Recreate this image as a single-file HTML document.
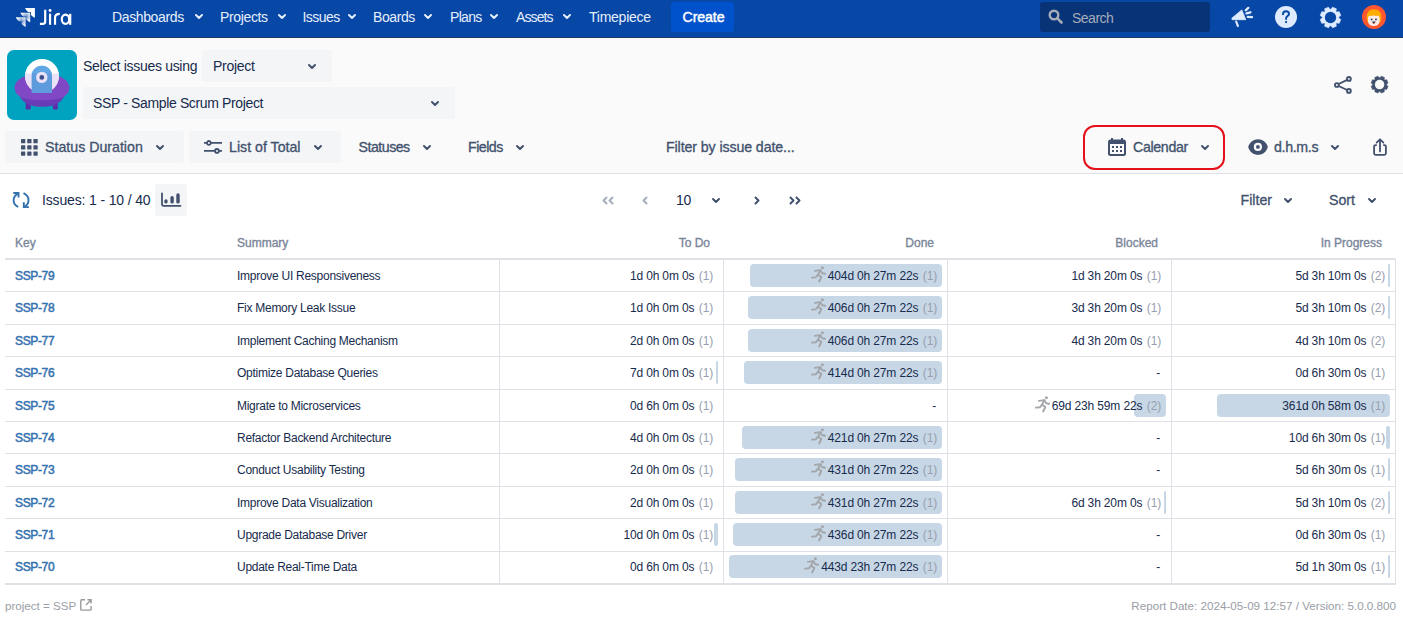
<!DOCTYPE html>
<html><head><meta charset="utf-8"><style>
*{box-sizing:border-box;margin:0;padding:0}
html,body{width:1403px;height:620px;overflow:hidden;background:#fff;font-family:"Liberation Sans",sans-serif;color:#172B4D}
.a{position:absolute;white-space:nowrap}
svg{position:absolute;overflow:visible}
.nav{position:absolute;white-space:nowrap;font-size:14px;color:#E6EFFC;line-height:16px;top:9px}
.btn{position:absolute;background:#F4F5F7;border-radius:3px}
.tb{position:absolute;white-space:nowrap;font-size:14.2px;font-weight:400;color:#42526E;line-height:16px;-webkit-text-stroke:0.32px #42526E}
.cell{position:absolute;white-space:nowrap;font-size:12px;line-height:14px;color:#172B4D;letter-spacing:-0.15px}
.sum{letter-spacing:-0.27px}
.cnt{color:#97A0AF;margin-left:1.3px}
.hd{position:absolute;white-space:nowrap;font-size:12px;font-weight:400;color:#7A869A;line-height:14px;-webkit-text-stroke:0.35px #7A869A}
.key{position:absolute;white-space:nowrap;font-size:12px;font-weight:400;color:#3572B0;line-height:14px;-webkit-text-stroke:0.5px #3572B0;letter-spacing:-0.35px}
.bar{position:absolute;background:#C7D7E6;border-radius:4px}
.hl{position:absolute;background:#DFE1E6}
</style></head><body>
<div class="a" style="left:0;top:0;width:1403px;height:37px;background:#0747A6"></div>
<div class="a" style="left:0;top:37px;width:1403px;height:1px;background:#1d3a6b"></div>
<svg style="left:0;top:0" width="80" height="37" viewBox="0 0 80 37">
<defs><radialGradient id="lg1" cx="26.1" cy="16.599999999999998" r="5.5" gradientUnits="userSpaceOnUse"><stop offset="0" stop-color="#fff" stop-opacity="0.4"/><stop offset="1" stop-color="#fff"/></radialGradient>
<radialGradient id="lg2" cx="21.6" cy="21.2" r="5.5" gradientUnits="userSpaceOnUse"><stop offset="0" stop-color="#fff" stop-opacity="0.4"/><stop offset="1" stop-color="#fff"/></radialGradient></defs>
<path d="M25.00 8.1 L34.9 8.1 L34.9 17.70 C33.40 17.10 31.90 16.10 31.00 14.90 L31.00 12.00 L28.10 12.00 C26.90 11.10 25.70 9.60 25.00 8.1 Z" fill="#fff"/>
<path d="M20.30 12.7 L30.2 12.7 L30.2 22.30 C28.70 21.70 27.20 20.70 26.30 19.50 L26.30 16.60 L23.40 16.60 C22.20 15.70 21.00 14.20 20.30 12.7 Z" fill="url(#lg1)"/>
<path d="M15.70 17.3 L25.6 17.3 L25.6 26.90 C24.10 26.30 22.60 25.30 21.70 24.10 L21.70 21.20 L18.80 21.20 C17.60 20.30 16.40 18.80 15.70 17.3 Z" fill="url(#lg2)"/>
<g fill="none" stroke="#fff" stroke-width="2.2">
<path d="M45.2 9.7 V21.5 Q45.2 23.8 42.8 23.8 H39.9"/>
<path d="M50.06 13.6 V24.8"/>
<path d="M55.03 24.8 V17.8 C55.03 15.2 57 13.9 59.8 13.9"/>
<ellipse cx="65.5" cy="19.2" rx="3.7" ry="4.6"/>
<path d="M70.2 13.8 V24.8"/>
</g><circle cx="50.06" cy="10.5" r="1.45" fill="#fff"/>
</svg>
<div class="nav" style="left:112px;letter-spacing:-0.37px">Dashboards</div>
<svg style="left:194.5px;top:14px" width="8" height="5" viewBox="0 0 8 5"><path d="M1 1 L4.0 4 L7 1" fill="none" stroke="#E6EFFC" stroke-width="2" stroke-linecap="round" stroke-linejoin="round"/></svg>
<div class="nav" style="left:220px;letter-spacing:-0.36px">Projects</div>
<svg style="left:277.5px;top:14px" width="8" height="5" viewBox="0 0 8 5"><path d="M1 1 L4.0 4 L7 1" fill="none" stroke="#E6EFFC" stroke-width="2" stroke-linecap="round" stroke-linejoin="round"/></svg>
<div class="nav" style="left:302.5px;letter-spacing:-0.54px">Issues</div>
<svg style="left:347.5px;top:14px" width="8" height="5" viewBox="0 0 8 5"><path d="M1 1 L4.0 4 L7 1" fill="none" stroke="#E6EFFC" stroke-width="2" stroke-linecap="round" stroke-linejoin="round"/></svg>
<div class="nav" style="left:373px;letter-spacing:-0.4px">Boards</div>
<svg style="left:424px;top:14px" width="8" height="5" viewBox="0 0 8 5"><path d="M1 1 L4.0 4 L7 1" fill="none" stroke="#E6EFFC" stroke-width="2" stroke-linecap="round" stroke-linejoin="round"/></svg>
<div class="nav" style="left:450px;letter-spacing:-0.7px">Plans</div>
<svg style="left:490px;top:14px" width="8" height="5" viewBox="0 0 8 5"><path d="M1 1 L4.0 4 L7 1" fill="none" stroke="#E6EFFC" stroke-width="2" stroke-linecap="round" stroke-linejoin="round"/></svg>
<div class="nav" style="left:516px;letter-spacing:-0.88px">Assets</div>
<svg style="left:563px;top:14px" width="8" height="5" viewBox="0 0 8 5"><path d="M1 1 L4.0 4 L7 1" fill="none" stroke="#E6EFFC" stroke-width="2" stroke-linecap="round" stroke-linejoin="round"/></svg>
<div class="nav" style="left:589px;letter-spacing:-0.25px">Timepiece</div>
<div class="a" style="left:671px;top:2px;width:63px;height:30px;background:#0052CC;border-radius:3px"></div>
<div class="a" style="left:682.5px;top:9px;font-size:14.2px;color:#fff;line-height:16px;-webkit-text-stroke:0.45px #fff;letter-spacing:-0.1px">Create</div>
<div class="a" style="left:1040px;top:2px;width:170px;height:30px;background:#083376;border-radius:3px"></div>
<svg style="left:1048px;top:9px" width="15" height="15" viewBox="0 0 15 15"><circle cx="6" cy="6" r="4.3" fill="none" stroke="#A5ADBA" stroke-width="2.4"/><path d="M9.2 9.2 L13.5 13.5" stroke="#A5ADBA" stroke-width="2.6" stroke-linecap="round"/></svg>
<div class="a" style="left:1072px;top:10px;font-size:14px;color:#A5ADBA;line-height:16px;letter-spacing:-0.5px">Search</div>
<svg style="left:1231px;top:7px" width="22" height="20" viewBox="0 0 22 20">
<path d="M0.8 11.2 L10.8 2.9 L14.8 12.7 L1.2 12.7 Z" fill="#DEEBFF" stroke="#DEEBFF" stroke-width="0.8" stroke-linejoin="round"/>
<path d="M5.2 14.6 L6.9 19" stroke="#DEEBFF" stroke-width="2.1" stroke-linecap="round"/>
<path d="M14.7 3.3 L17.3 0.9 M15.5 6.4 L19.4 5.3 M16.8 9.8 L21 10.2" stroke="#DEEBFF" stroke-width="2.3" stroke-linecap="round"/>
</svg>
<svg style="left:1275px;top:6px" width="22" height="22" viewBox="0 0 22 22"><circle cx="11" cy="11" r="11" fill="#DEEBFF"/>
<path d="M8 8.3 C8 6.3 9.4 5.3 11 5.3 C12.7 5.3 14 6.4 14 8 C14 9.8 11.6 10.2 11.1 12 V13" fill="none" stroke="#0747A6" stroke-width="1.9" stroke-linecap="round"/><circle cx="11.1" cy="16.1" r="1.15" fill="#0747A6"/></svg>
<svg style="left:1319.5px;top:6.5px" width="21" height="21" viewBox="0 0 21 21"><path d="M18.67 11.01 L20.81 12.51 L19.21 16.37 L16.64 15.92 L15.92 16.64 L16.37 19.21 L12.51 20.81 L11.01 18.67 L9.99 18.67 L8.49 20.81 L4.63 19.21 L5.08 16.64 L4.36 15.92 L1.79 16.37 L0.19 12.51 L2.33 11.01 L2.33 9.99 L0.19 8.49 L1.79 4.63 L4.36 5.08 L5.08 4.36 L4.63 1.79 L8.49 0.19 L9.99 2.33 L11.01 2.33 L12.51 0.19 L16.37 1.79 L15.92 4.36 L16.64 5.08 L19.21 4.63 L20.81 8.49 L18.67 9.99Z" fill="#DEEBFF" stroke="#DEEBFF" stroke-width="0.6" stroke-linejoin="round"/><circle cx="10.5" cy="10.5" r="5.67" fill="#0747A6"/></svg>
<svg style="left:1362px;top:5px" width="24" height="24" viewBox="0 0 24 24"><circle cx="12" cy="12" r="12" fill="#FF5630"/>
<path d="M4.6 13 C4.2 7.5 7.5 4.3 12 4.3 C16.5 4.3 19.8 7.5 19.4 13 C19.3 15.5 18.6 17.2 17.6 17.8 L6.4 17.8 C5.4 17.2 4.7 15.5 4.6 13Z" fill="#FFAB00"/>
<path d="M6.1 12.5 C6.5 10.8 8 10.6 9.5 10.9 C10.5 11.1 11.3 10.6 11.8 10 C12.3 10.6 13.1 11.1 14.1 10.9 C15.6 10.6 17.1 10.8 17.5 12.5 L17.6 16.5 C17.2 19.5 15 21 11.8 21 C8.6 21 6.4 19.5 6 16.5 Z" fill="#FFEBE6"/>
<circle cx="9.6" cy="14.4" r="0.95" fill="#253858"/><circle cx="14" cy="14.4" r="0.95" fill="#253858"/>
<path d="M9.7 16.6 Q11.8 20 13.9 16.6 Z" fill="#253858"/><path d="M10.6 18.3 Q11.8 19.5 13 18.3 Q11.8 17.7 10.6 18.3Z" fill="#DE350B"/></svg>
<div class="a" style="left:0;top:38px;width:1403px;height:135px;background:#FAFAFA"></div>
<div class="a" style="left:0;top:173px;width:1403px;height:1px;background:#DFE1E6"></div>
<svg style="left:7px;top:50px" width="70" height="70" viewBox="0 0 70 70">
<rect width="70" height="70" rx="7" fill="#00A3BF"/>
<rect x="18.7" y="48" width="5" height="11.5" rx="1" fill="#5B2FA8"/><rect x="45.8" y="48" width="5" height="11.5" rx="1" fill="#5B2FA8"/>
<ellipse cx="35" cy="37.8" rx="27.5" ry="15" fill="#8048C4"/>
<path d="M12.5 46.5 C19 51.5 51 51.5 57.5 46.5 C53 54 45 56.8 35 56.8 C25 56.8 17 54 12.5 46.5Z" fill="#6A3BB7"/>
<circle cx="35" cy="26" r="17" fill="#fff"/>
<path d="M18.3 22.5 C24 25.5 46 25.5 51.7 22.5 C52 23.6 52 25 52 26 C52 35.4 44.4 43 35 43 C25.6 43 18 35.4 18 26 C18 25 18 23.6 18.3 22.5Z" fill="#E9E1F6"/>
<path d="M24.6 43 V26 C24.6 20.3 29.2 15.8 34.8 15.8 C40.4 15.8 45 20.3 45 26 V43 Z" fill="#5E9BDD"/>
<path d="M24.6 22.5 V26 C24.6 20.3 29.2 15.8 34.8 15.8 C40.4 15.8 45 20.3 45 26 V22.5 C40 24.6 30 24.6 24.6 22.5Z" fill="#62A8E6" opacity="0.9"/>
<circle cx="34.8" cy="27.4" r="5.7" fill="#E9E1F6"/><circle cx="34.8" cy="27.4" r="2.4" fill="#3D4E8A"/>
</svg>
<div class="a" style="left:83px;top:58px;font-size:14px;line-height:16px;color:#172B4D;letter-spacing:-0.3px">Select issues using</div>
<div class="btn" style="left:202px;top:50px;width:130px;height:32px"></div>
<div class="a" style="left:213px;top:58px;font-size:14px;line-height:16px;color:#172B4D;letter-spacing:-0.29px">Project</div>
<svg style="left:308px;top:63.5px" width="8" height="5" viewBox="0 0 8 5"><path d="M1 1 L4.0 4 L7 1" fill="none" stroke="#42526E" stroke-width="2" stroke-linecap="round" stroke-linejoin="round"/></svg>
<div class="btn" style="left:83px;top:87px;width:372px;height:32px"></div>
<div class="a" style="left:93px;top:95px;font-size:14px;line-height:16px;color:#172B4D;letter-spacing:-0.36px">SSP - Sample Scrum Project</div>
<svg style="left:431px;top:100.5px" width="8" height="5" viewBox="0 0 8 5"><path d="M1 1 L4.0 4 L7 1" fill="none" stroke="#42526E" stroke-width="2" stroke-linecap="round" stroke-linejoin="round"/></svg>
<svg style="left:1330px;top:72px" width="28" height="26" viewBox="0 0 28 26"><g fill="none" stroke="#42526E" stroke-width="1.9"><circle cx="18.9" cy="6.9" r="1.9"/><circle cx="6.9" cy="13" r="1.9"/><circle cx="18.9" cy="18.9" r="1.9"/><path d="M8.6 12 L17.2 7.8 M8.6 14 L17.2 18"/></g></svg>
<svg style="left:1371px;top:76px" width="17.2" height="17.2" viewBox="0 0 17.2 17.2"><path d="M15.47 9.03 L17.04 10.25 L15.73 13.40 L13.76 13.15 L13.15 13.76 L13.40 15.73 L10.25 17.04 L9.03 15.47 L8.17 15.47 L6.95 17.04 L3.80 15.73 L4.05 13.76 L3.44 13.15 L1.47 13.40 L0.16 10.25 L1.73 9.03 L1.73 8.17 L0.16 6.95 L1.47 3.80 L3.44 4.05 L4.05 3.44 L3.80 1.47 L6.95 0.16 L8.17 1.73 L9.03 1.73 L10.25 0.16 L13.40 1.47 L13.15 3.44 L13.76 4.05 L15.73 3.80 L17.04 6.95 L15.47 8.17Z" fill="#42526E" stroke="#42526E" stroke-width="0.6" stroke-linejoin="round"/><circle cx="8.6" cy="8.6" r="4.73" fill="#FAFAFA"/></svg>
<div class="btn" style="left:5px;top:131px;width:179px;height:32px"></div>
<svg style="left:20.5px;top:139px" width="17" height="17" viewBox="0 0 17 17" fill="#42526E">
<rect x="0" y="0" width="4.3" height="4.3" rx="0.6"/><rect x="6.2" y="0" width="4.3" height="4.3" rx="0.6"/><rect x="12.4" y="0" width="4.3" height="4.3" rx="0.6"/>
<rect x="0" y="6.2" width="4.3" height="4.3" rx="0.6"/><rect x="6.2" y="6.2" width="4.3" height="4.3" rx="0.6"/><rect x="12.4" y="6.2" width="4.3" height="4.3" rx="0.6"/>
<rect x="0" y="12.4" width="4.3" height="4.3" rx="0.6"/><rect x="6.2" y="12.4" width="4.3" height="4.3" rx="0.6"/><rect x="12.4" y="12.4" width="4.3" height="4.3" rx="0.6"/></svg>
<div class="tb" style="left:45px;top:139px">Status Duration</div>
<svg style="left:156px;top:144.5px" width="8" height="5" viewBox="0 0 8 5"><path d="M1 1 L4.0 4 L7 1" fill="none" stroke="#42526E" stroke-width="2" stroke-linecap="round" stroke-linejoin="round"/></svg>
<div class="btn" style="left:189px;top:131px;width:152px;height:32px"></div>
<svg style="left:204px;top:140px" width="18" height="14" viewBox="0 0 18 14"><g fill="none" stroke="#42526E" stroke-width="1.8"><path d="M0 2.9 H3 M6.8 2.9 H18 M0 10.9 H11.05 M14.85 10.9 H18"/><circle cx="4.9" cy="2.9" r="1.9"/><circle cx="12.95" cy="10.9" r="1.9"/></g></svg>
<div class="tb" style="left:229px;top:139px">List of Total</div>
<svg style="left:314px;top:144.5px" width="8" height="5" viewBox="0 0 8 5"><path d="M1 1 L4.0 4 L7 1" fill="none" stroke="#42526E" stroke-width="2" stroke-linecap="round" stroke-linejoin="round"/></svg>
<div class="tb" style="left:358.5px;top:139px;letter-spacing:-0.5px">Statuses</div>
<svg style="left:423px;top:144.5px" width="8" height="5" viewBox="0 0 8 5"><path d="M1 1 L4.0 4 L7 1" fill="none" stroke="#42526E" stroke-width="2" stroke-linecap="round" stroke-linejoin="round"/></svg>
<div class="tb" style="left:468px;top:139px;letter-spacing:-0.5px">Fields</div>
<svg style="left:516px;top:144.5px" width="8" height="5" viewBox="0 0 8 5"><path d="M1 1 L4.0 4 L7 1" fill="none" stroke="#42526E" stroke-width="2" stroke-linecap="round" stroke-linejoin="round"/></svg>
<div class="tb" style="left:666px;top:139px;letter-spacing:-0.1px">Filter by issue date...</div>
<div class="a" style="left:1083px;top:125px;width:142px;height:45px;border:2px solid #E5101A;border-radius:12px"></div>
<svg style="left:1108px;top:138px" width="18" height="18" viewBox="0 0 18 18"><rect x="1" y="2.5" width="16" height="14.5" rx="1.5" fill="none" stroke="#42526E" stroke-width="2"/><rect x="1" y="2.5" width="16" height="3.5" fill="#42526E"/><path d="M4 0 V3.5 M14 0 V3.5" stroke="#42526E" stroke-width="2"/>
<g fill="#42526E"><rect x="4" y="8" width="2" height="2"/><rect x="8" y="8" width="2" height="2"/><rect x="12" y="8" width="2" height="2"/><rect x="4" y="12" width="2" height="2"/><rect x="8" y="12" width="2" height="2"/><rect x="12" y="12" width="2" height="2"/></g></svg>
<div class="tb" style="left:1133px;top:139px;letter-spacing:-0.33px">Calendar</div>
<svg style="left:1201px;top:144.5px" width="8" height="5" viewBox="0 0 8 5"><path d="M1 1 L4.0 4 L7 1" fill="none" stroke="#42526E" stroke-width="2" stroke-linecap="round" stroke-linejoin="round"/></svg>
<svg style="left:1248px;top:139px" width="20" height="16" viewBox="0 0 20 16"><path d="M0.2 8 C1.5 3 5.5 0.2 10 0.2 C14.5 0.2 18.5 3 19.8 8 C18.5 13 14.5 15.8 10 15.8 C5.5 15.8 1.5 13 0.2 8Z" fill="#42526E"/><circle cx="9.9" cy="7.9" r="4.1" fill="#FAFAFA"/><circle cx="9.9" cy="7.9" r="1.9" fill="#42526E"/></svg>
<div class="tb" style="left:1274px;top:139px;letter-spacing:-0.33px">d.h.m.s</div>
<svg style="left:1331px;top:144.5px" width="8" height="5" viewBox="0 0 8 5"><path d="M1 1 L4.0 4 L7 1" fill="none" stroke="#42526E" stroke-width="2" stroke-linecap="round" stroke-linejoin="round"/></svg>
<svg style="left:1372px;top:138px" width="16" height="19" viewBox="0 0 16 19"><path d="M4.8 7.1 H3.6 Q2.1 7.1 2.1 8.6 V15.3 Q2.1 16.8 3.6 16.8 H12.4 Q13.9 16.8 13.9 15.3 V8.6 Q13.9 7.1 12.4 7.1 H11.2" fill="none" stroke="#42526E" stroke-width="1.8"/><path d="M8 13.4 V1.6 M4.6 4.6 L8 1.3 L11.4 4.6" fill="none" stroke="#42526E" stroke-width="1.8" stroke-linecap="round" stroke-linejoin="round"/></svg>
<svg style="left:8px;top:186px" width="28" height="28" viewBox="0 0 28 28"><g fill="none" stroke="#3572B0" stroke-width="1.9" stroke-linejoin="miter">
<path d="M5.3 7 H10.5 V11.5"/><path d="M10.3 7.3 C7 9 5.6 11.5 5.6 14.2 C5.6 17 7.3 19.5 10.3 21"/>
<path d="M15.5 7.2 C18.8 8.8 20.5 11.5 20.5 14.2 C20.5 17 18.8 19.5 15.9 21"/><path d="M15.8 16.3 V21.1 H20.9"/></g></svg>
<div class="a" style="left:42px;top:192px;font-size:14px;line-height:16px;color:#172B4D;letter-spacing:-0.15px">Issues: 1 - 10 / 40</div>
<div class="btn" style="left:155px;top:184px;width:32px;height:32px"></div>
<svg style="left:155px;top:184px" width="32" height="32" viewBox="0 0 32 32"><path d="M7 9.3 V20 Q7 21.8 8.8 21.8 H25.5" fill="none" stroke="#42526E" stroke-width="1.8" stroke-linecap="round"/>
<g fill="#42526E"><rect x="9.3" y="15.2" width="3.3" height="4.4" rx="1.65"/><rect x="15.4" y="12.1" width="3.4" height="7.5" rx="1.7"/><rect x="21.3" y="9.2" width="3.4" height="10.4" rx="1.7"/></g></svg>
<svg style="left:601.5px;top:195.6px" width="12" height="9" viewBox="0 0 12 9"><g fill="none" stroke="#A5ADBA" stroke-width="2" stroke-linecap="round" stroke-linejoin="round"><path d="M4.5 1.5 L1.5 4.5 L4.5 7.5"/><path d="M10.5 1.5 L7.5 4.5 L10.5 7.5"/></g></svg>
<svg style="left:641.5px;top:195.6px" width="6" height="9" viewBox="0 0 6 9"><g fill="none" stroke="#A5ADBA" stroke-width="2" stroke-linecap="round" stroke-linejoin="round"><path d="M4.5 1.5 L1.5 4.5 L4.5 7.5"/></g></svg>
<div class="a" style="left:676px;top:192px;font-size:14px;line-height:16px;color:#172B4D;letter-spacing:-0.3px">10</div>
<svg style="left:712px;top:197.5px" width="8" height="5" viewBox="0 0 8 5"><path d="M1 1 L4.0 4 L7 1" fill="none" stroke="#42526E" stroke-width="2" stroke-linecap="round" stroke-linejoin="round"/></svg>
<svg style="left:754.3px;top:195.6px" width="6" height="9" viewBox="0 0 6 9"><g fill="none" stroke="#42526E" stroke-width="2" stroke-linecap="round" stroke-linejoin="round"><path d="M1.5 1.5 L4.5 4.5 L1.5 7.5"/></g></svg>
<svg style="left:788.5px;top:195.6px" width="12" height="9" viewBox="0 0 12 9"><g fill="none" stroke="#42526E" stroke-width="2" stroke-linecap="round" stroke-linejoin="round"><path d="M1.5 1.5 L4.5 4.5 L1.5 7.5"/><path d="M7.5 1.5 L10.5 4.5 L7.5 7.5"/></g></svg>
<div class="tb" style="left:1240.5px;top:192px">Filter</div>
<svg style="left:1284px;top:197.5px" width="8" height="5" viewBox="0 0 8 5"><path d="M1 1 L4.0 4 L7 1" fill="none" stroke="#42526E" stroke-width="2" stroke-linecap="round" stroke-linejoin="round"/></svg>
<div class="tb" style="left:1329px;top:192px">Sort</div>
<svg style="left:1368px;top:197.5px" width="8" height="5" viewBox="0 0 8 5"><path d="M1 1 L4.0 4 L7 1" fill="none" stroke="#42526E" stroke-width="2" stroke-linecap="round" stroke-linejoin="round"/></svg>
<div class="hd" style="left:15px;top:236px">Key</div>
<div class="hd" style="left:237px;top:236px">Summary</div>
<div class="hd" style="right:693px;top:236px">To Do</div>
<div class="hd" style="right:469px;top:236px">Done</div>
<div class="hd" style="right:245px;top:236px">Blocked</div>
<div class="hd" style="right:21px;top:236px">In Progress</div>
<div class="hl" style="left:5px;top:258px;width:1391px;height:2px"></div>
<div class="hl" style="left:5px;top:291px;width:1391px;height:1px"></div>
<div class="hl" style="left:5px;top:324px;width:1391px;height:1px"></div>
<div class="hl" style="left:5px;top:356px;width:1391px;height:1px"></div>
<div class="hl" style="left:5px;top:389px;width:1391px;height:1px"></div>
<div class="hl" style="left:5px;top:421px;width:1391px;height:1px"></div>
<div class="hl" style="left:5px;top:453px;width:1391px;height:1px"></div>
<div class="hl" style="left:5px;top:486px;width:1391px;height:1px"></div>
<div class="hl" style="left:5px;top:518px;width:1391px;height:1px"></div>
<div class="hl" style="left:5px;top:551px;width:1391px;height:1px"></div>
<div class="hl" style="left:5px;top:583px;width:1391px;height:2px"></div>
<div class="hl" style="left:499px;top:260px;width:1px;height:323px"></div>
<div class="hl" style="left:723px;top:260px;width:1px;height:323px"></div>
<div class="hl" style="left:947px;top:260px;width:1px;height:323px"></div>
<div class="hl" style="left:1171px;top:260px;width:1px;height:323px"></div>
<div class="hl" style="left:1395px;top:260px;width:1px;height:323px"></div>
<div class="key" style="left:15px;top:269.05px">SSP-79</div>
<div class="cell sum" style="left:237px;top:269.05px">Improve UI Responsiveness</div>
<div class="cell" style="right:690px;top:269.05px">1d 0h 0m 0s&nbsp;<span class="cnt">(1)</span></div>
<div class="bar" style="left:750px;top:264.0px;width:192px;height:23px"></div>
<div class="cell" style="right:466px;top:269.05px"><svg style="left:-17px;top:-3px" width="16" height="16" viewBox="3.5 2.5 16 16"><g fill="none" stroke="#A3A6AB" stroke-width="1.9" stroke-linecap="round" stroke-linejoin="round"><path d="M7.4 7.4 L12.8 6.6 L10.4 11.6"/><path d="M12.9 6.8 L14.7 9.7 L17.6 10.3"/><path d="M10.1 11.5 L8.5 13.8 L4.5 14.1"/><path d="M10.6 11.4 L13.9 13.5 L11.6 18"/></g><circle cx="14.9" cy="4.3" r="1.5" fill="#A3A6AB"/></svg>404d 0h 27m 22s&nbsp;<span class="cnt">(1)</span></div>
<div class="cell" style="right:242px;top:269.05px">1d 3h 20m 0s&nbsp;<span class="cnt">(1)</span></div>
<div class="bar" style="left:1388px;top:264.0px;width:2px;height:23px"></div>
<div class="cell" style="right:18px;top:269.05px">5d 3h 10m 0s&nbsp;<span class="cnt">(2)</span></div>
<div class="key" style="left:15px;top:301.425px">SSP-78</div>
<div class="cell sum" style="left:237px;top:301.425px">Fix Memory Leak Issue</div>
<div class="cell" style="right:690px;top:301.425px">1d 0h 0m 0s&nbsp;<span class="cnt">(1)</span></div>
<div class="bar" style="left:748px;top:296.38px;width:194px;height:23px"></div>
<div class="cell" style="right:466px;top:301.425px"><svg style="left:-17px;top:-3px" width="16" height="16" viewBox="3.5 2.5 16 16"><g fill="none" stroke="#A3A6AB" stroke-width="1.9" stroke-linecap="round" stroke-linejoin="round"><path d="M7.4 7.4 L12.8 6.6 L10.4 11.6"/><path d="M12.9 6.8 L14.7 9.7 L17.6 10.3"/><path d="M10.1 11.5 L8.5 13.8 L4.5 14.1"/><path d="M10.6 11.4 L13.9 13.5 L11.6 18"/></g><circle cx="14.9" cy="4.3" r="1.5" fill="#A3A6AB"/></svg>406d 0h 27m 22s&nbsp;<span class="cnt">(1)</span></div>
<div class="cell" style="right:242px;top:301.425px">3d 3h 20m 0s&nbsp;<span class="cnt">(1)</span></div>
<div class="bar" style="left:1388px;top:296.38px;width:2px;height:23px"></div>
<div class="cell" style="right:18px;top:301.425px">5d 3h 10m 0s&nbsp;<span class="cnt">(2)</span></div>
<div class="key" style="left:15px;top:333.8px">SSP-77</div>
<div class="cell sum" style="left:237px;top:333.8px">Implement Caching Mechanism</div>
<div class="cell" style="right:690px;top:333.8px">2d 0h 0m 0s&nbsp;<span class="cnt">(1)</span></div>
<div class="bar" style="left:748px;top:328.75px;width:194px;height:23px"></div>
<div class="cell" style="right:466px;top:333.8px"><svg style="left:-17px;top:-3px" width="16" height="16" viewBox="3.5 2.5 16 16"><g fill="none" stroke="#A3A6AB" stroke-width="1.9" stroke-linecap="round" stroke-linejoin="round"><path d="M7.4 7.4 L12.8 6.6 L10.4 11.6"/><path d="M12.9 6.8 L14.7 9.7 L17.6 10.3"/><path d="M10.1 11.5 L8.5 13.8 L4.5 14.1"/><path d="M10.6 11.4 L13.9 13.5 L11.6 18"/></g><circle cx="14.9" cy="4.3" r="1.5" fill="#A3A6AB"/></svg>406d 0h 27m 22s&nbsp;<span class="cnt">(1)</span></div>
<div class="cell" style="right:242px;top:333.8px">4d 3h 20m 0s&nbsp;<span class="cnt">(1)</span></div>
<div class="cell" style="right:18px;top:333.8px">4d 3h 10m 0s&nbsp;<span class="cnt">(2)</span></div>
<div class="key" style="left:15px;top:366.175px">SSP-76</div>
<div class="cell sum" style="left:237px;top:366.175px">Optimize Database Queries</div>
<div class="bar" style="left:716px;top:361.12px;width:2px;height:23px"></div>
<div class="cell" style="right:690px;top:366.175px">7d 0h 0m 0s&nbsp;<span class="cnt">(1)</span></div>
<div class="bar" style="left:744px;top:361.12px;width:198px;height:23px"></div>
<div class="cell" style="right:466px;top:366.175px"><svg style="left:-17px;top:-3px" width="16" height="16" viewBox="3.5 2.5 16 16"><g fill="none" stroke="#A3A6AB" stroke-width="1.9" stroke-linecap="round" stroke-linejoin="round"><path d="M7.4 7.4 L12.8 6.6 L10.4 11.6"/><path d="M12.9 6.8 L14.7 9.7 L17.6 10.3"/><path d="M10.1 11.5 L8.5 13.8 L4.5 14.1"/><path d="M10.6 11.4 L13.9 13.5 L11.6 18"/></g><circle cx="14.9" cy="4.3" r="1.5" fill="#A3A6AB"/></svg>414d 0h 27m 22s&nbsp;<span class="cnt">(1)</span></div>
<div class="cell" style="right:243px;top:366.175px">-</div>
<div class="cell" style="right:18px;top:366.175px">0d 6h 30m 0s&nbsp;<span class="cnt">(1)</span></div>
<div class="key" style="left:15px;top:398.55px">SSP-75</div>
<div class="cell sum" style="left:237px;top:398.55px">Migrate to Microservices</div>
<div class="cell" style="right:690px;top:398.55px">0d 6h 0m 0s&nbsp;<span class="cnt">(1)</span></div>
<div class="cell" style="right:467px;top:398.55px">-</div>
<div class="bar" style="left:1134px;top:393.5px;width:32px;height:23px"></div>
<div class="cell" style="right:242px;top:398.55px"><svg style="left:-17px;top:-3px" width="16" height="16" viewBox="3.5 2.5 16 16"><g fill="none" stroke="#A3A6AB" stroke-width="1.9" stroke-linecap="round" stroke-linejoin="round"><path d="M7.4 7.4 L12.8 6.6 L10.4 11.6"/><path d="M12.9 6.8 L14.7 9.7 L17.6 10.3"/><path d="M10.1 11.5 L8.5 13.8 L4.5 14.1"/><path d="M10.6 11.4 L13.9 13.5 L11.6 18"/></g><circle cx="14.9" cy="4.3" r="1.5" fill="#A3A6AB"/></svg>69d 23h 59m 22s&nbsp;<span class="cnt">(2)</span></div>
<div class="bar" style="left:1217px;top:393.5px;width:173px;height:23px"></div>
<div class="cell" style="right:18px;top:398.55px">361d 0h 58m 0s&nbsp;<span class="cnt">(1)</span></div>
<div class="key" style="left:15px;top:430.925px">SSP-74</div>
<div class="cell sum" style="left:237px;top:430.925px">Refactor Backend Architecture</div>
<div class="cell" style="right:690px;top:430.925px">4d 0h 0m 0s&nbsp;<span class="cnt">(1)</span></div>
<div class="bar" style="left:742px;top:425.88px;width:200px;height:23px"></div>
<div class="cell" style="right:466px;top:430.925px"><svg style="left:-17px;top:-3px" width="16" height="16" viewBox="3.5 2.5 16 16"><g fill="none" stroke="#A3A6AB" stroke-width="1.9" stroke-linecap="round" stroke-linejoin="round"><path d="M7.4 7.4 L12.8 6.6 L10.4 11.6"/><path d="M12.9 6.8 L14.7 9.7 L17.6 10.3"/><path d="M10.1 11.5 L8.5 13.8 L4.5 14.1"/><path d="M10.6 11.4 L13.9 13.5 L11.6 18"/></g><circle cx="14.9" cy="4.3" r="1.5" fill="#A3A6AB"/></svg>421d 0h 27m 22s&nbsp;<span class="cnt">(1)</span></div>
<div class="cell" style="right:243px;top:430.925px">-</div>
<div class="bar" style="left:1386px;top:425.88px;width:4px;height:23px"></div>
<div class="cell" style="right:18px;top:430.925px">10d 6h 30m 0s&nbsp;<span class="cnt">(1)</span></div>
<div class="key" style="left:15px;top:463.3px">SSP-73</div>
<div class="cell sum" style="left:237px;top:463.3px">Conduct Usability Testing</div>
<div class="cell" style="right:690px;top:463.3px">2d 0h 0m 0s&nbsp;<span class="cnt">(1)</span></div>
<div class="bar" style="left:735px;top:458.25px;width:207px;height:23px"></div>
<div class="cell" style="right:466px;top:463.3px"><svg style="left:-17px;top:-3px" width="16" height="16" viewBox="3.5 2.5 16 16"><g fill="none" stroke="#A3A6AB" stroke-width="1.9" stroke-linecap="round" stroke-linejoin="round"><path d="M7.4 7.4 L12.8 6.6 L10.4 11.6"/><path d="M12.9 6.8 L14.7 9.7 L17.6 10.3"/><path d="M10.1 11.5 L8.5 13.8 L4.5 14.1"/><path d="M10.6 11.4 L13.9 13.5 L11.6 18"/></g><circle cx="14.9" cy="4.3" r="1.5" fill="#A3A6AB"/></svg>431d 0h 27m 22s&nbsp;<span class="cnt">(1)</span></div>
<div class="cell" style="right:243px;top:463.3px">-</div>
<div class="bar" style="left:1387.6px;top:458.25px;width:2.400000000000091px;height:23px"></div>
<div class="cell" style="right:18px;top:463.3px">5d 6h 30m 0s&nbsp;<span class="cnt">(1)</span></div>
<div class="key" style="left:15px;top:495.675px">SSP-72</div>
<div class="cell sum" style="left:237px;top:495.675px">Improve Data Visualization</div>
<div class="cell" style="right:690px;top:495.675px">2d 0h 0m 0s&nbsp;<span class="cnt">(1)</span></div>
<div class="bar" style="left:735px;top:490.62px;width:207px;height:23px"></div>
<div class="cell" style="right:466px;top:495.675px"><svg style="left:-17px;top:-3px" width="16" height="16" viewBox="3.5 2.5 16 16"><g fill="none" stroke="#A3A6AB" stroke-width="1.9" stroke-linecap="round" stroke-linejoin="round"><path d="M7.4 7.4 L12.8 6.6 L10.4 11.6"/><path d="M12.9 6.8 L14.7 9.7 L17.6 10.3"/><path d="M10.1 11.5 L8.5 13.8 L4.5 14.1"/><path d="M10.6 11.4 L13.9 13.5 L11.6 18"/></g><circle cx="14.9" cy="4.3" r="1.5" fill="#A3A6AB"/></svg>431d 0h 27m 22s&nbsp;<span class="cnt">(1)</span></div>
<div class="bar" style="left:1164px;top:490.62px;width:2px;height:23px"></div>
<div class="cell" style="right:242px;top:495.675px">6d 3h 20m 0s&nbsp;<span class="cnt">(1)</span></div>
<div class="bar" style="left:1388px;top:490.62px;width:2px;height:23px"></div>
<div class="cell" style="right:18px;top:495.675px">5d 3h 10m 0s&nbsp;<span class="cnt">(2)</span></div>
<div class="key" style="left:15px;top:528.05px">SSP-71</div>
<div class="cell sum" style="left:237px;top:528.05px">Upgrade Database Driver</div>
<div class="bar" style="left:714px;top:523.0px;width:4px;height:23px"></div>
<div class="cell" style="right:690px;top:528.05px">10d 0h 0m 0s&nbsp;<span class="cnt">(1)</span></div>
<div class="bar" style="left:733px;top:523.0px;width:209px;height:23px"></div>
<div class="cell" style="right:466px;top:528.05px"><svg style="left:-17px;top:-3px" width="16" height="16" viewBox="3.5 2.5 16 16"><g fill="none" stroke="#A3A6AB" stroke-width="1.9" stroke-linecap="round" stroke-linejoin="round"><path d="M7.4 7.4 L12.8 6.6 L10.4 11.6"/><path d="M12.9 6.8 L14.7 9.7 L17.6 10.3"/><path d="M10.1 11.5 L8.5 13.8 L4.5 14.1"/><path d="M10.6 11.4 L13.9 13.5 L11.6 18"/></g><circle cx="14.9" cy="4.3" r="1.5" fill="#A3A6AB"/></svg>436d 0h 27m 22s&nbsp;<span class="cnt">(1)</span></div>
<div class="cell" style="right:243px;top:528.05px">-</div>
<div class="cell" style="right:18px;top:528.05px">0d 6h 30m 0s&nbsp;<span class="cnt">(1)</span></div>
<div class="key" style="left:15px;top:560.425px">SSP-70</div>
<div class="cell sum" style="left:237px;top:560.425px">Update Real-Time Data</div>
<div class="cell" style="right:690px;top:560.425px">0d 6h 0m 0s&nbsp;<span class="cnt">(1)</span></div>
<div class="bar" style="left:729px;top:555.38px;width:213px;height:23px"></div>
<div class="cell" style="right:466px;top:560.425px"><svg style="left:-17px;top:-3px" width="16" height="16" viewBox="3.5 2.5 16 16"><g fill="none" stroke="#A3A6AB" stroke-width="1.9" stroke-linecap="round" stroke-linejoin="round"><path d="M7.4 7.4 L12.8 6.6 L10.4 11.6"/><path d="M12.9 6.8 L14.7 9.7 L17.6 10.3"/><path d="M10.1 11.5 L8.5 13.8 L4.5 14.1"/><path d="M10.6 11.4 L13.9 13.5 L11.6 18"/></g><circle cx="14.9" cy="4.3" r="1.5" fill="#A3A6AB"/></svg>443d 23h 27m 22s&nbsp;<span class="cnt">(1)</span></div>
<div class="cell" style="right:243px;top:560.425px">-</div>
<div class="bar" style="left:1388px;top:555.38px;width:2px;height:23px"></div>
<div class="cell" style="right:18px;top:560.425px">5d 1h 30m 0s&nbsp;<span class="cnt">(1)</span></div>
<div class="a" style="left:5px;top:598.8px;font-size:11.6px;line-height:14px;color:#999EA6">project = SSP</div>
<svg style="left:80px;top:599px" width="13" height="13" viewBox="0 0 13 13"><path d="M5 0.8 H1.6 Q0.8 0.8 0.8 1.6 V10.3 Q0.8 11.1 1.6 11.1 H10.3 Q11.1 11.1 11.1 10.3 V7" fill="none" stroke="#9A9A9A" stroke-width="1.4"/><path d="M7.5 0.8 H11.1 V4.4 M11 0.9 L6 5.9" fill="none" stroke="#9A9A9A" stroke-width="1.4"/></svg>
<div class="a" style="right:7px;top:598.8px;font-size:11.65px;line-height:14px;color:#999EA6">Report Date: 2024-05-09 12:57 / Version: 5.0.0.800</div>
</body></html>
